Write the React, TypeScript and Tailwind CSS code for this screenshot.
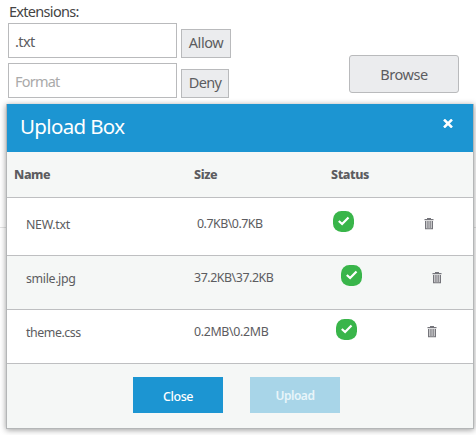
import React from "react";

type FileRow = {
  name: string;
  nameClass: string;
  size: string;
  sizeClass: string;
  statusClass: string;
  trashClass: string;
  rowClass: string;
};

const files: FileRow[] = [
  { name: "NEW.txt", nameClass: "tracking-[-0.3px]", size: "0.7KB\\0.7KB", sizeClass: "pl-[190px] tracking-[-0.5px]", statusClass: "pl-[326px] w-[347px]", trashClass: "pl-[417px]", rowClass: "h-[58px] bg-white" },
  { name: "smile.jpg", nameClass: "tracking-[-0.35px]", size: "37.2KB\\37.2KB", sizeClass: "pl-[187px] tracking-[-0.45px]", statusClass: "pl-[334px] w-[355px]", trashClass: "pl-[425px]", rowClass: "h-[54px] bg-[#f5f7f6]" },
  { name: "theme.css", nameClass: "tracking-[-0.45px]", size: "0.2MB\\0.2MB", sizeClass: "pl-[187px] tracking-[-0.35px]", statusClass: "pl-[329px] w-[350px]", trashClass: "pl-[420px]", rowClass: "h-[54px] bg-white" },
];

function Check() {
  return (
    <svg width="21" height="21" viewBox="0 0 21 21" className="block">
      <rect width="21" height="21" rx="8.5" fill="#39b54a" />
      <path d="M5.8 10 L9.1 13 L15.5 6.500" fill="none" stroke="#fff" strokeWidth="2.2" />
    </svg>
  );
}

function Trash() {
  return (
    <svg width="10" height="12" viewBox="0 0 10 12" className="block" fill="#74747a">
      <path d="M3 0h4v1h2.500v1.200h-9V1H3z" />
      <path d="M1 3h8v8H1z" fill="#dcdcde" />
      <path d="M1 3h1.200v8H1zM3.400 3h1.100v7H3.400zM5.600 3h1.100v7H5.600zM7.800 3H9v8H7.800zM1 10.200h8v1H1z" />
    </svg>
  );
}

function Row({ f, lift }: { f: FileRow; lift: boolean }) {
  return (
    <div className={"grid border-b border-[#bebfc1] text-[12.400px] leading-[16px] text-[#5c5c60] " + f.rowClass}>
      <div className={"col-start-1 row-start-1 pl-[19px] " + (lift ? "pt-[19px] " : "pt-[15px] ") + f.nameClass}>{f.name}</div>
      <div className={"col-start-1 row-start-1 " + (lift ? "pt-[18px] " : "pt-[14px] ") + f.sizeClass}>{f.size}</div>
      <div className={"col-start-1 row-start-1 box-border " + (lift ? "pt-[13px] " : "pt-[9px] ") + f.statusClass}><Check /></div>
      <div className={"col-start-1 row-start-1 " + (lift ? "pt-[20px] " : "pt-[16px] ") + f.trashClass}><Trash /></div>
    </div>
  );
}

export default function App() {
  return (
    <div className="relative h-[435px] w-[476px] overflow-hidden bg-white font-['Noto_Sans','Open_Sans',sans-serif] text-[#5c5c60]">
      <div className="flex h-[228px] border-b border-[#e3e3e3] pl-2">
        <div className="w-[341px] shrink-0">
          <div className="h-[23px] pl-px pt-px text-[14.500px] leading-5 tracking-[-0.7px] text-[#444]">Extensions:</div>
          <div className="flex items-end gap-1">
            <div className="h-[35px] w-[169px] border border-[#b9babc] pl-[6px] pt-[8px] text-[14.500px] leading-[18px] tracking-[-0.6px]">.txt</div>
            <button className="h-[29px] w-[50px] border border-[#b9babc] bg-[#ebecee] pb-[2px] text-[14.500px] leading-none tracking-[-0.4px]">Allow</button>
          </div>
          <div className="mt-[5px] flex items-end gap-1">
            <div className="h-[35px] w-[169px] border border-[#b9babc] pl-[6px] pt-[8px] text-[14.500px] leading-[18px] tracking-[-0.8px] text-[#aaa]">Format</div>
            <button className="h-[29px] w-[48px] border border-[#b9babc] bg-[#ebecee] pb-[2px] text-[14.500px] leading-none tracking-[-0.7px]">Deny</button>
          </div>
        </div>
        <button className="mt-[55px] h-[38px] w-[110px] rounded-[3px] border border-[#b9babc] bg-[#ebecee] pt-px text-[14.500px] tracking-[-0.4px]">Browse</button>
      </div>

      <div className="absolute left-[6px] top-[104px] w-[468px] border-x border-b border-[#b4b6b7] bg-[#f5f7f6] shadow-[0_1px_6px_rgba(0,0,0,0.4)]">
        <div className="flex h-12 justify-between bg-[#1c95d2] pl-[13px] pr-[20px] text-white">
          <h1 className="pt-[8px] text-[20.500px] leading-[28px] tracking-[-0.65px]">Upload Box</h1>
          <svg width="10" height="9" viewBox="0 0 10 9" className="mt-[15px]" stroke="#fff" strokeWidth="2.500"><path d="M1 .5L9 8.500M9 .5L1 8.500" /></svg>
        </div>
        <div className="flex h-[46px] border-b border-[#bebfc1] pl-[7px] pt-[14px] text-[12.500px] font-extrabold leading-[17px] tracking-[-0.4px]">
          <div className="w-[180px]">Name</div>
          <div className="w-[137px]">Size</div>
          <div>Status</div>
        </div>
        {files.map((f, i) => <Row key={f.name} f={f} lift={i === 0} />)}
        <div className="flex h-[64px] gap-[27px] pl-[126px] pt-[13px]">
          <button className="h-[36px] w-[90px] bg-[#1c95d2] pt-[4px] text-[12.500px] font-medium tracking-[-0.4px] text-white">Close</button>
          <button className="h-[36px] w-[90px] bg-[#a8d5e8] pt-[2px] text-[12px] font-semibold tracking-[-0.5px] text-[#e9f5fa]">Upload</button>
        </div>
      </div>
    </div>
  );
}
